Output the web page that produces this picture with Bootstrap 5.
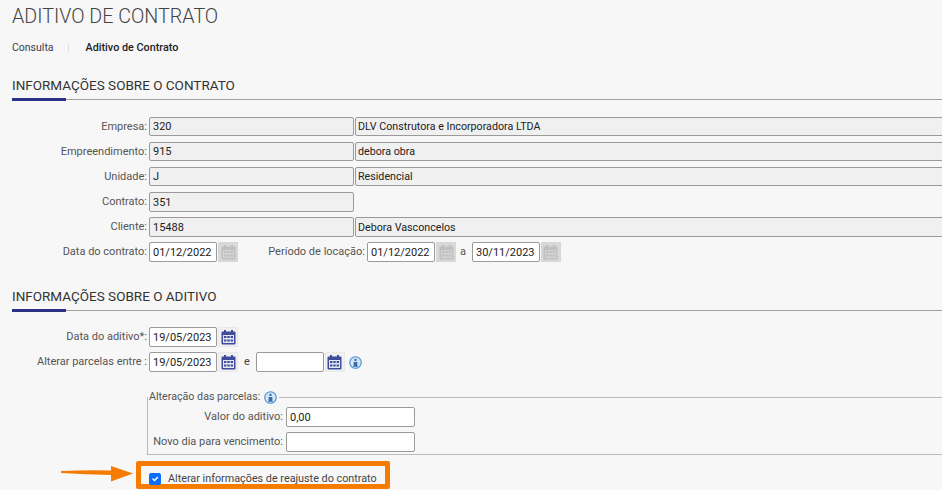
<!DOCTYPE html>
<html lang="pt-BR">
<head>
<meta charset="utf-8">
<title>Aditivo de Contrato</title>
<link href="https://cdn.jsdelivr.net/npm/bootstrap@5.3.0/dist/css/bootstrap.min.css" rel="stylesheet">
<style>
html,body{height:490px;overflow:hidden}
body{background:#f7f7f7;font-family:Roboto,"Liberation Sans",sans-serif;font-size:11px;color:#555;line-height:20px;white-space:nowrap}
.page-title{font-size:19.7px;font-weight:300;line-height:24px;color:#444;margin:5px 0 0 12px;height:24px}
.crumbs{margin:9px 0 0 12px;height:20px;font-size:10.5px;gap:14px;color:#3c3c55}
.crumbs .cur{color:#222;font-size:10.8px;font-weight:500;margin-left:3px}
.crumb-sep{width:1px;height:8px;background:#ddd}
.sec{margin-left:12px;border-bottom:1px solid #a0a0a0;position:relative;height:22px}
.sec h2{font-size:13.5px;font-weight:400;line-height:14px;color:#333;margin:0}
.sec::after{content:"";position:absolute;left:0;bottom:-2px;width:54px;height:3px;background:#2b3285}
.sec-a{margin-top:20px}
.sec-b{margin-top:27px}
.rows-a{margin-top:17px}
.frow{display:flex;align-items:center;height:20px;margin-bottom:5px}
.lab{width:147px;text-align:right;flex:none}
.field{height:20px;min-height:20px;border:1px solid #9a9a9a;border-radius:2px;padding:0 3px;font-size:11px;line-height:18px;color:#222;background:#fff;flex:none}
.field:disabled,.field[readonly]{background:#f0f0f0;color:#222;opacity:1}
.frow-short .field{height:19px;min-height:19px;align-self:flex-start}
.w-code{width:205px;margin-left:2px}
.w-name{width:700px;margin-left:1px;font-size:10.7px;padding-left:2px}
.w-date{width:68px;margin-left:2px}
.cal{width:20px;height:20px;flex:none;margin-left:1px;display:flex;align-items:center;justify-content:center;border:1px solid}
.cal svg{display:block}
.cal-off{background:#d8d8d8;border-color:#d8d8d8;color:#bfbfbf;--cal-in:#d4d4d4}
.cal-on{background:#f0f0f0;border-color:#e9e9e9;color:#3f4c9c;--cal-in:#e4e6f2}
.lab2{margin-left:30px;width:97px;text-align:right;flex:none}
.gap-a{margin:0 4px 0 4px}
.gap-e{margin:0 4px 0 6px;color:#444}
.info{flex:none;display:block}
.parc{margin:17px 0 0 147px;border:1px solid #bbb;border-right:0;padding:0;width:800px;height:66px}
.parc legend{float:none;width:auto;font-size:10.7px;line-height:16px;margin:0;padding:0 0 0 1px;color:#555;display:flex;align-items:center;gap:4px;height:16px}
.parc legend .info{margin-right:2px}
.lab3{width:135px;text-align:right;flex:none}
.w-val{width:129px;margin-left:3px}
.parc-in{margin-top:2px}
.mark-row{display:flex;align-items:flex-start;margin:6px 0 0 61px}
.hi-box{border:5px solid #f57c00;border-radius:2px;height:28px;width:254px;display:flex;align-items:center;padding:8px 0 0 8px;gap:7px;color:#444;margin:0;font-size:10.8px}
.hi-box .form-check-input{margin:0;width:12px;height:12px;border-radius:2px;flex:none;background-color:#0d6efd;border-color:#0d6efd}
.arrow{display:block;flex:none;margin:5px 3px 0 0}
</style>
</head>
<body>
<svg width="0" height="0" class="position-absolute">
<symbol id="ic-cal" viewBox="0 0 15 15">
<rect x="0.5" y="1.5" width="14" height="13" rx="1" fill="currentColor"/>
<rect x="3" y="0" width="2" height="3" fill="currentColor"/><rect x="10" y="0" width="2" height="3" fill="currentColor"/>
<rect x="2" y="5" width="11" height="8" fill="var(--cal-in)"/>
<g fill="currentColor"><rect x="3" y="6" width="2.4" height="2"/><rect x="6.3" y="6" width="2.4" height="2"/><rect x="9.6" y="6" width="2.4" height="2"/><rect x="3" y="9.5" width="2.4" height="2"/><rect x="6.3" y="9.5" width="2.4" height="2"/><rect x="9.6" y="9.5" width="2.4" height="2"/></g>
</symbol>
<symbol id="ic-info" viewBox="0 0 14 14">
<circle cx="7" cy="7" r="6.2" fill="#d5e6f7" stroke="#4a90d4" stroke-width="1.2"/>
<circle cx="7" cy="4.2" r="1.3" fill="#3a6aa8"/><path d="M5 6.4h4v4.4h.6v.9H4.4v-.9H5z" fill="#3a6aa8"/>
</symbol>
</svg>

<h1 class="page-title">ADITIVO DE CONTRATO</h1>
<div class="crumbs d-flex align-items-center"><span>Consulta</span><span class="crumb-sep"></span><span class="cur">Aditivo de Contrato</span></div>

<div class="sec sec-a"><h2>INFORMAÇÕES SOBRE O CONTRATO</h2></div>
<div class="rows-a">
<div class="frow frow-short"><span class="lab">Empresa:</span><input class="form-control field w-code" readonly value="320"><input class="form-control field w-name" readonly value="DLV Construtora e Incorporadora LTDA"></div>
<div class="frow frow-short"><span class="lab">Empreendimento:</span><input class="form-control field w-code" readonly value="915"><input class="form-control field w-name" readonly value="debora obra"></div>
<div class="frow frow-short"><span class="lab">Unidade:</span><input class="form-control field w-code" readonly value="J"><input class="form-control field w-name" readonly value="Residencial"></div>
<div class="frow"><span class="lab">Contrato:</span><input class="form-control field w-code" readonly value="351"></div>
<div class="frow"><span class="lab">Cliente:</span><input class="form-control field w-code" readonly value="15488"><input class="form-control field w-name" readonly value="Debora Vasconcelos"></div>
<div class="frow"><span class="lab">Data do contrato:</span><input class="form-control field w-date" value="01/12/2022"><span class="cal cal-off"><svg width="15" height="15"><use href="#ic-cal"/></svg></span>
<span class="lab2">Período de locação:</span><input class="form-control field w-date" value="01/12/2022"><span class="cal cal-off"><svg width="15" height="15"><use href="#ic-cal"/></svg></span><span class="gap-a">a</span><input class="form-control field w-date" value="30/11/2023"><span class="cal cal-off"><svg width="15" height="15"><use href="#ic-cal"/></svg></span></div>
</div>

<div class="sec sec-b"><h2>INFORMAÇÕES SOBRE O ADITIVO</h2></div>
<div class="mt-3">
<div class="frow"><span class="lab">Data do aditivo*:</span><input class="form-control field w-date" value="19/05/2023"><span class="cal cal-on"><svg width="15" height="15"><use href="#ic-cal"/></svg></span></div>
<div class="frow"><span class="lab">Alterar parcelas entre :</span><input class="form-control field w-date" value="19/05/2023"><span class="cal cal-on"><svg width="15" height="15"><use href="#ic-cal"/></svg></span><span class="gap-e">e</span><input class="form-control field w-date" value=""><span class="cal cal-on"><svg width="15" height="15"><use href="#ic-cal"/></svg></span><svg class="info ms-1" width="13" height="13"><use href="#ic-info"/></svg></div>
</div>
<fieldset class="parc">
<legend>Alteração das parcelas:<svg class="info" width="13" height="13"><use href="#ic-info"/></svg></legend>
<div class="parc-in">
<div class="frow"><span class="lab3">Valor do aditivo:</span><input class="form-control field w-val" value="0,00"></div>
<div class="frow"><span class="lab3">Novo dia para vencimento:</span><input class="form-control field w-val" value=""></div>
</div>
</fieldset>
<div class="mark-row">
<svg class="arrow" width="72" height="16" viewBox="0 0 72 16"><path d="M0 5 Q25 4 50 4.5 L50 0 L72 7.5 L50 15.5 L50 9 Q25 8.5 0 7z" fill="#f57c00"/></svg>
<label class="hi-box"><input class="form-check-input" type="checkbox" checked><span>Alterar informações de reajuste do contrato</span></label>
</div>
<script src="https://cdn.jsdelivr.net/npm/bootstrap@5.3.0/dist/js/bootstrap.bundle.min.js"></script>
</body>
</html>
